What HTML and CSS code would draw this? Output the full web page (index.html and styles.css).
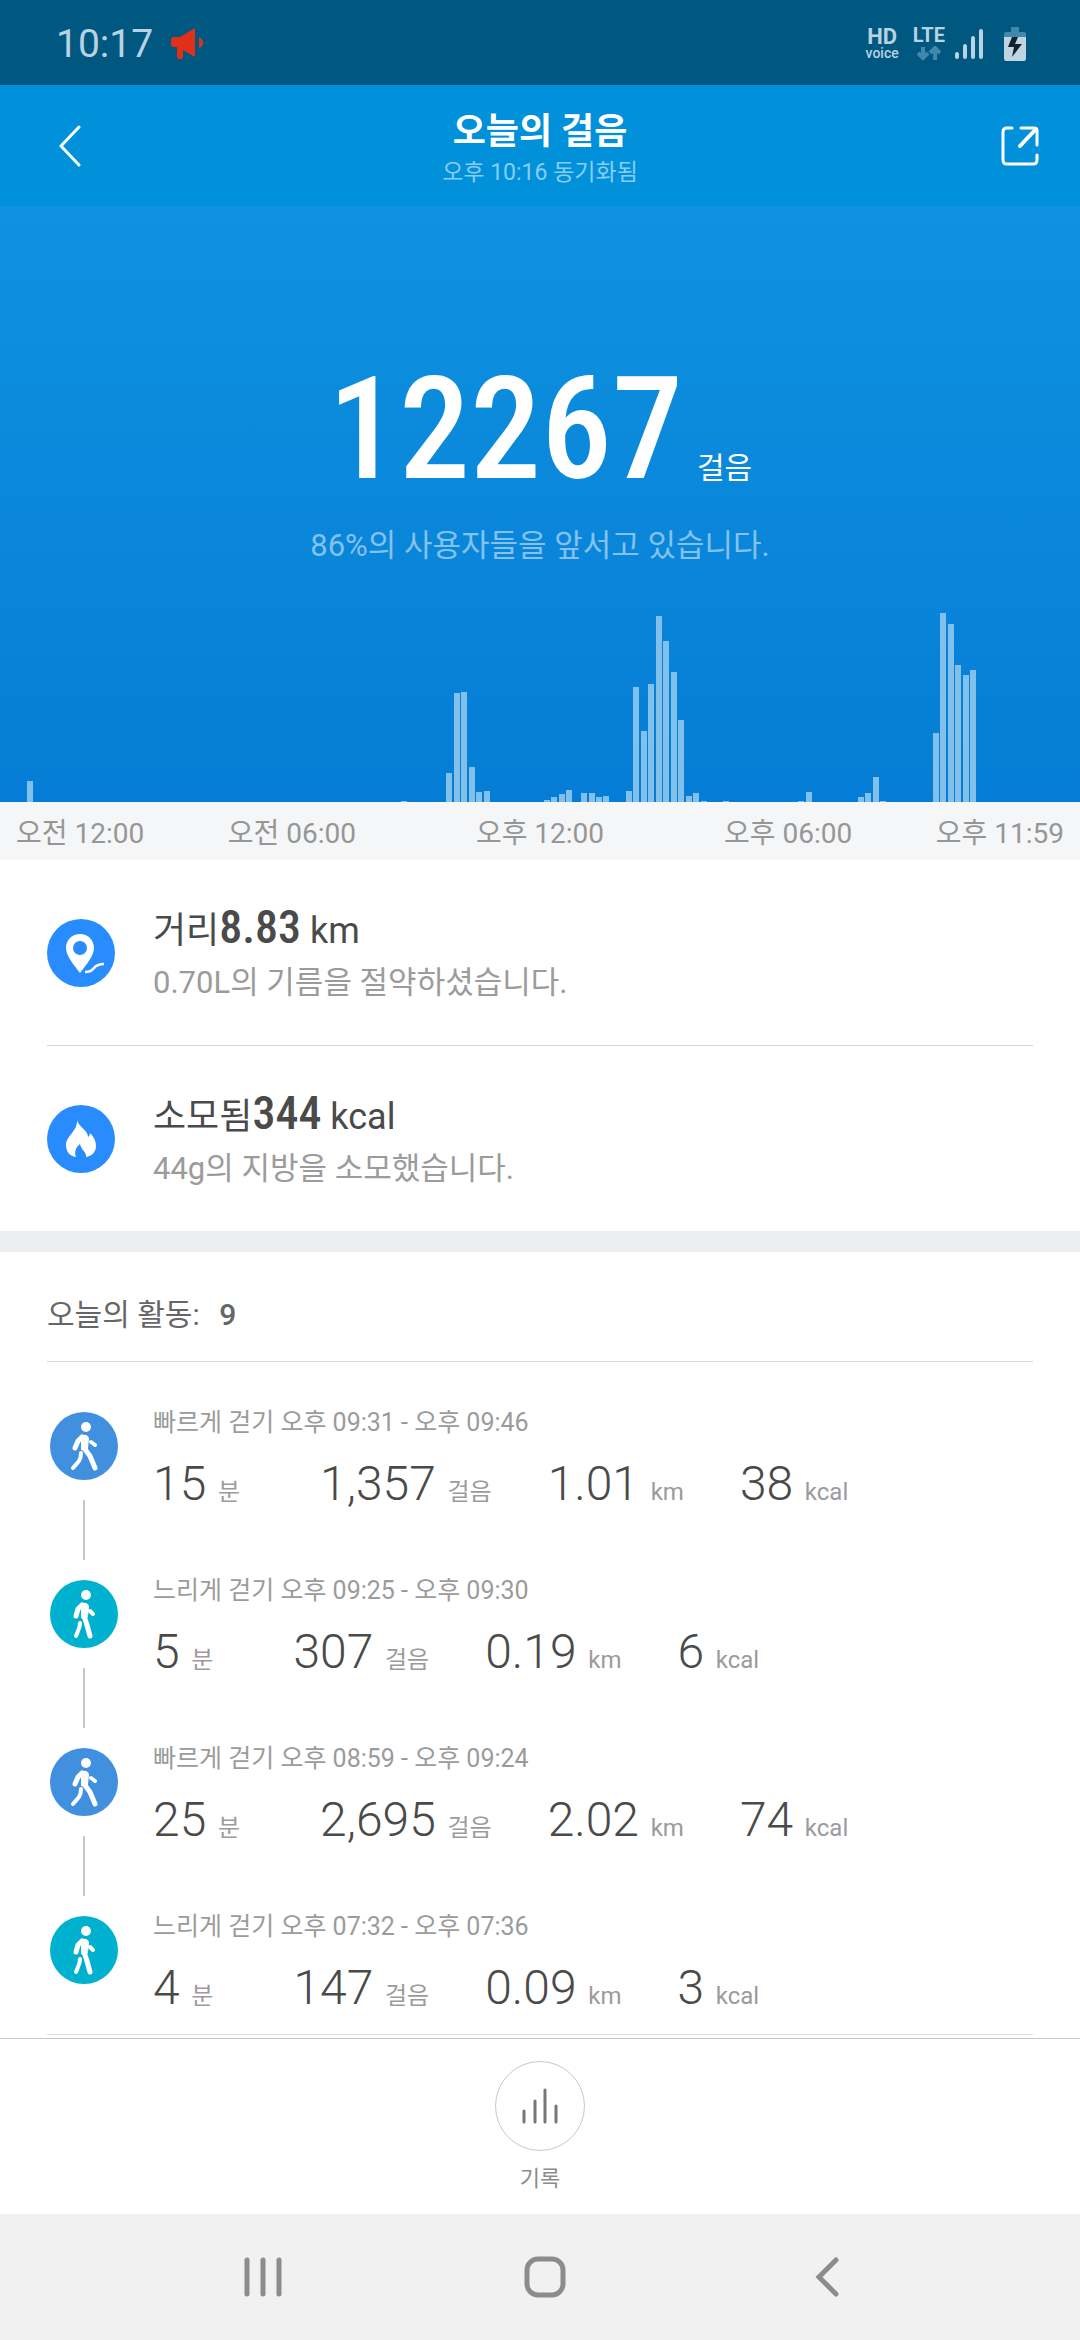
FILE: index.html
```html
<!DOCTYPE html>
<html lang="ko">
  <head>
    <meta charset="UTF-8" />
    <meta name="viewport" content="width=device-width, initial-scale=1.0" />
    <title>오늘의 걸음</title>
    <link rel="stylesheet" href="styles.css">
  </head>
  <body>
    <!-- shared icons -->
    <svg class="sprite" aria-hidden="true">
      <symbol id="walk-fast" viewBox="0 0 68 68">
        <circle cx="36" cy="15" r="5" fill="#fff" />
        <path d="M30 24q3-2 6-1q3 1 3 4l-1 9l-1 3l-6-1l0-10z" fill="#fff" />
        <path d="M32 25l-4 4l-3 7" />
        <path d="M34 36l6 8l5 12" />
        <path d="M31 41q0 5-2 8l-6 7" class="thin" />
        <path d="M41 30l4 3" class="thin" />
      </symbol>
      <symbol id="walk-slow" viewBox="0 0 68 68">
        <circle cx="36" cy="15" r="5" fill="#fff" />
        <path d="M30 24q3-2 6-1q3 1 3 4l-1 9l-1 3l-6-1l0-10z" fill="#fff" />
        <path d="M32 25l-4 4l-2 7" />
        <path d="M34 36l3 9l3 11" />
        <path d="M30 43q0 4-2 8l-2 5" class="thin" />
        <path d="M40 31l3 3" class="thin" />
      </symbol>
    </svg>

    <div class="status-bar">
      <span class="clock">10:17</span>
      <svg class="horn" width="32" height="32" viewBox="0 0 32 32" fill="#e0301a">
        <path d="M2 9h7L24 0v29L12 22v7q0 2-2 2H8q-2 0-2-2V19H2q-2 0-2-2v-6q0-2 2-2z" />
        <path d="M28 9q4 2 4 6t-4 5z" />
      </svg>
      <div class="status-icons">
        <div class="hd">
          <span class="hd-top">HD</span>
          <span class="hd-sub">voice</span>
        </div>
        <div class="lte">
          <span class="lte-text">LTE</span>
          <svg width="24" height="15" viewBox="0 0 24 15" fill="none" stroke="#4089ac" stroke-width="4">
            <path d="M6 1v10M1 7l5 5l5-5M18 14V3M13 7l5-5l5 5" />
          </svg>
        </div>
        <svg class="signal" width="28" height="32" viewBox="0 0 28 32" stroke="#b7d3e1" stroke-width="4" stroke-linecap="round">
          <path d="M2 26v3M10 18v11M18 10v19M26 3v26" />
        </svg>
        <svg class="battery" width="22" height="34" viewBox="0 0 22 34">
          <path d="M7 0h8v5h5q2 0 2 2v4H0V7q0-2 2-2h5z" fill="#4089ac" />
          <path d="M0 10h22v21q0 3-2 3H2q-2 0-2-3z" fill="#bfd5e1" />
          <path d="M8 10h6l-3 7h7L8 30l2-10H4z" fill="#12232d" />
        </svg>
      </div>
    </div>

    <header class="header">
      <button class="icon-btn" aria-label="뒤로">
        <svg width="22" height="42" viewBox="0 0 22 42" fill="none" stroke="#fff" stroke-width="3" stroke-linecap="round" stroke-linejoin="round">
          <path d="M20 2L2 21l18 19" />
        </svg>
      </button>
      <div class="header-text">
        <h1>오늘의 걸음</h1>
        <p>오후 10:16 동기화됨</p>
      </div>
      <button class="icon-btn" aria-label="공유">
        <svg width="38" height="40" viewBox="0 0 38 40" fill="none" stroke="#fff" stroke-width="3" stroke-linecap="round" stroke-linejoin="round">
          <path d="M11 2H6Q2 2 2 6v28q0 4 4 4h26q4 0 4-4v-5M20 2h13q3 0 3 3v14" />
          <path d="M35 3L19 20" stroke-width="4" />
        </svg>
      </button>
    </header>

    <section class="hero">
      <div class="steps">
        <span class="steps-number">12267</span>
        <span class="steps-unit">걸음</span>
      </div>
      <p class="rank">86%의 사용자들을 앞서고 있습니다.</p>
      <div class="chart" id="chart"></div>
    </section>
    <div class="axis">
      <span>오전 12:00</span>
      <div class="axis-middle">
        <span>오전 06:00</span>
        <span>오후 12:00</span>
        <span>오후 06:00</span>
      </div>
      <span>오후 11:59</span>
    </div>

    <section class="summary">
      <div class="summary-row">
        <svg class="badge" viewBox="0 0 68 68">
          <circle cx="34" cy="34" r="34" fill="#288cff" />
          <path d="M33 15c-8 0-14 6-14 14c0 8 8 17 14 25c6-8 14-17 14-25c0-8-6-14-14-14zm0 7a7 7 0 1 1 0 14a7 7 0 1 1 0-14z" fill="#fff" fill-rule="evenodd" />
          <path d="M38 53q6 0 9-4t10-4" fill="none" stroke="#fff" stroke-width="2.5" />
        </svg>
        <div class="summary-text">
          <p class="summary-title">거리<b>8.83</b> km</p>
          <p class="summary-note">0.70L의 기름을 절약하셨습니다.</p>
        </div>
      </div>
      <div class="summary-row">
        <svg class="badge" viewBox="0 0 68 68">
          <circle cx="34" cy="34" r="34" fill="#288cff" />
          <path d="M30 15c1 6 11 10 11 17c1-1 2-2 2-4c4 4 6 8 6 13c0 6-4 10-10 11c1-5-5-7-6-13c-4 3-6 8-4 13c-7-1-10-6-10-12c0-9 12-14 11-25z" fill="#fff" />
        </svg>
        <div class="summary-text">
          <p class="summary-title">소모됨<b>344</b> kcal</p>
          <p class="summary-note">44g의 지방을 소모했습니다.</p>
        </div>
      </div>
    </section>

    <section class="activities">
      <h2>오늘의 활동: <b>9</b></h2>
      <ul class="activity-list">
        <li class="activity">
          <div class="track"><svg class="walker fast"><use href="#walk-fast" /></svg></div>
          <div class="activity-body">
            <p class="activity-time">빠르게 걷기 오후 09:31 - 오후 09:46</p>
            <div class="stats">
              <span class="stat minutes">15 <small>분</small></span>
              <span class="stat">1,357 <small>걸음</small></span>
              <span class="stat">1.01 <small>km</small></span>
              <span class="stat">38 <small>kcal</small></span>
            </div>
          </div>
        </li>
        <li class="activity">
          <div class="track"><svg class="walker slow"><use href="#walk-slow" /></svg></div>
          <div class="activity-body">
            <p class="activity-time">느리게 걷기 오후 09:25 - 오후 09:30</p>
            <div class="stats">
              <span class="stat minutes">5 <small>분</small></span>
              <span class="stat">307 <small>걸음</small></span>
              <span class="stat">0.19 <small>km</small></span>
              <span class="stat">6 <small>kcal</small></span>
            </div>
          </div>
        </li>
        <li class="activity">
          <div class="track"><svg class="walker fast"><use href="#walk-fast" /></svg></div>
          <div class="activity-body">
            <p class="activity-time">빠르게 걷기 오후 08:59 - 오후 09:24</p>
            <div class="stats">
              <span class="stat minutes">25 <small>분</small></span>
              <span class="stat">2,695 <small>걸음</small></span>
              <span class="stat">2.02 <small>km</small></span>
              <span class="stat">74 <small>kcal</small></span>
            </div>
          </div>
        </li>
        <li class="activity">
          <div class="track"><svg class="walker slow"><use href="#walk-slow" /></svg></div>
          <div class="activity-body">
            <p class="activity-time">느리게 걷기 오후 07:32 - 오후 07:36</p>
            <div class="stats">
              <span class="stat minutes">4 <small>분</small></span>
              <span class="stat">147 <small>걸음</small></span>
              <span class="stat">0.09 <small>km</small></span>
              <span class="stat">3 <small>kcal</small></span>
            </div>
          </div>
        </li>
      </ul>
    </section>

    <footer class="footer">
      <button class="history-btn">
        <span class="history-icon">
          <svg width="36" height="36" viewBox="0 0 36 36" stroke="#777" stroke-width="3" stroke-linecap="round">
            <path d="M2 23v11M13 13v21M23 2v32M34 18v16" />
          </svg>
        </span>
        기록
      </button>
    </footer>

    <nav class="nav-bar">
      <button aria-label="최근 앱">
        <svg width="38" height="42" viewBox="0 0 38 42" stroke="#8c8c8c" stroke-width="5" stroke-linecap="round">
          <path d="M3 4v34M19 4v34M35 4v34" />
        </svg>
      </button>
      <button aria-label="홈">
        <svg width="42" height="42" viewBox="0 0 42 42" fill="none" stroke="#8c8c8c" stroke-width="5">
          <rect x="3" y="3" width="36" height="36" rx="11" />
        </svg>
      </button>
      <button aria-label="이전">
        <svg width="24" height="42" viewBox="0 0 24 42" fill="none" stroke="#8c8c8c" stroke-width="5" stroke-linecap="round">
          <path d="M21 4L4 21l17 17" />
        </svg>
      </button>
    </nav>

    <script>
      // one slot per 10 minutes, slot number -> bar height
      const steps = {
        4: 21, 54: 1,
        60: 29, 61: 109, 62: 110, 63: 35, 64: 10, 65: 11,
        73: 2, 74: 5, 75: 8, 76: 12, 78: 9, 79: 9, 80: 5, 81: 6,
        84: 11, 85: 115, 86: 71, 87: 118, 88: 186, 89: 161, 90: 130, 91: 82,
        92: 6, 93: 9, 94: 1, 97: 1, 107: 1, 108: 10,
        115: 5, 116: 9, 117: 25, 118: 1,
        125: 69, 126: 189, 127: 178, 128: 137, 129: 127, 130: 132
      };
      const chart = document.getElementById("chart");

      for (let i = 1; i < 144; i++) {
        const slot = document.createElement("div");
        slot.classList.add("bar");
        slot.style.height = `${steps[i] || 0}px`;
        chart.appendChild(slot);
      }
    </script>
  </body>
</html>
```
FILE: styles.css
```css
* {
  box-sizing: border-box;
}

body {
  margin: 0;
  min-height: 100vh;
  display: flex;
  flex-direction: column;
  font-family: Roboto, "Noto Sans CJK KR", sans-serif;
  background: #fff;
  color: #4a4a4a;
}

h1,
h2,
p,
ul {
  margin: 0;
  padding: 0;
}

button {
  padding: 0;
  border: none;
  background: none;
  font-family: inherit;
  cursor: pointer;
}

svg {
  display: block;
}

.sprite {
  position: absolute;
  width: 0;
  height: 0;
}

.status-bar {
  display: flex;
  align-items: center;
  height: 85px;
  padding: 2px 54px 0 56px;
  background: #005780;
  color: #b7d3e1;
}

.clock {
  font-size: 39px;
  line-height: 48px;
}

.horn {
  margin-left: 18px;
}

.status-icons {
  display: flex;
  align-items: center;
  margin-left: auto;
}

.hd,
.lte {
  display: flex;
  flex-direction: column;
  align-items: center;
  margin-right: 14px;
}

.hd-top {
  font-size: 22px;
  font-weight: 700;
  line-height: 18px;
}

.hd-sub {
  font-size: 14px;
  font-weight: 500;
  line-height: 14px;
}

.lte {
  gap: 2px;
  margin-right: 10px;
}

.lte-text {
  font-size: 20px;
  font-weight: 700;
  line-height: 18px;
}

.signal {
  margin-right: 21px;
}

.header {
  display: flex;
  align-items: center;
  justify-content: space-between;
  height: 121px;
  padding: 0 41px 0 59px;
  background: #0091da;
  color: #fff;
}

.icon-btn {
  display: flex;
  width: 40px;
}

.icon-btn:last-child {
  justify-content: flex-end;
}

.header-text {
  flex: 1;
  padding: 6px 18px 0 0;
  text-align: center;
}

.header-text h1 {
  font-size: 36px;
  font-weight: 700;
  line-height: 48px;
}

.header-text p {
  font-size: 23px;
  line-height: 34px;
  color: #88cdf2;
}

.hero {
  display: flex;
  flex-direction: column;
  align-items: center;
  min-height: 596px;
  padding-top: 164px;
  background: linear-gradient(#0f92e0, #057dd6);
  color: #fff;
}

.steps {
  display: flex;
  align-items: baseline;
  gap: 14px;
}

.steps-number {
  font-family: "Roboto Condensed", Roboto, sans-serif;
  font-size: 142px;
  font-weight: 500;
  line-height: 120px;
}

.steps-unit {
  font-size: 30px;
  line-height: 40px;
}

.rank {
  margin-top: 34px;
  font-size: 31px;
  line-height: 44px;
  color: #84c2ee;
}

.chart {
  display: flex;
  flex: 1;
  align-items: flex-end;
  justify-content: space-around;
  align-self: stretch;
  padding: 0 4px;
}

.bar {
  width: 6px;
  background: #82c0ec;
}

.axis {
  display: flex;
  align-items: center;
  justify-content: space-between;
  height: 58px;
  padding: 0 16px;
  background: #f5f6f8;
  font-size: 28px;
  color: #969696;
}

.axis-middle {
  display: flex;
  gap: 120px;
}

.summary {
  padding: 0 47px;
  border-bottom: 21px solid #edeef0;
}

.summary-row {
  display: flex;
  align-items: center;
  gap: 38px;
  height: 185px;
}

.summary-row + .summary-row {
  height: 186px;
  border-top: 1px solid #d6d6d6;
}

.badge,
.walker {
  width: 68px;
  height: 68px;
}

.summary-text {
  padding-top: 8px;
}

.summary-title {
  font-size: 36px;
  line-height: 52px;
}

.summary-title b {
  font-family: "Roboto Condensed", Roboto, sans-serif;
  font-size: 46px;
  font-weight: 500;
  line-height: 1;
}

.summary-note {
  font-size: 31px;
  line-height: 52px;
  color: #9b9b9b;
}

.activities {
  padding: 0 47px;
}

.activities h2 {
  height: 110px;
  padding-top: 40px;
  border-bottom: 1px solid #d6d6d6;
  font-size: 30px;
  font-weight: 400;
  line-height: 46px;
  color: #666;
}

.activities h2 b {
  margin-left: 12px;
  font-weight: 500;
}

.activity-list {
  list-style: none;
  border-bottom: 1px solid #dcdcdc;
}

.activity {
  display: flex;
  gap: 35px;
  height: 168px;
  padding-left: 3px;
}

.track {
  display: flex;
  flex-direction: column;
  align-items: center;
  justify-content: space-between;
}

.track::before,
.track::after {
  content: "";
  width: 2px;
  height: 30px;
  background: #c8c8c8;
}

.activity:first-child .track::before,
.activity:last-child .track::after {
  background: none;
}

.walker {
  border-radius: 50%;
  fill: none;
  stroke: #fff;
  stroke-width: 5;
  stroke-linecap: round;
  stroke-linejoin: round;
}

symbol [fill="#fff"] {
  stroke: none;
}

.thin {
  stroke-width: 4;
}

.fast {
  background: #4190e0;
}

.slow {
  background: #00b0cf;
}

.activity-body {
  padding-top: 42px;
}

.activity-time {
  font-size: 25px;
  line-height: 38px;
  color: #9b9b9b;
}

.stats {
  display: flex;
  gap: 56px;
  margin-top: 12px;
}

.stat {
  font-size: 48px;
  font-weight: 350;
  line-height: 60px;
  white-space: nowrap;
}

.stat small {
  font-size: 24px;
  font-weight: 400;
  color: #9b9b9b;
}

.minutes {
  margin-right: 24px;
}

.footer {
  display: flex;
  justify-content: center;
  margin-top: 3px;
  height: 176px;
  padding-top: 22px;
  border-top: 1px solid #c8c8c8;
}

.history-btn {
  display: flex;
  flex-direction: column;
  align-items: center;
  gap: 11px;
  font-size: 22px;
  line-height: 34px;
  color: #8c8c8c;
}

.history-icon {
  display: flex;
  align-items: center;
  justify-content: center;
  width: 90px;
  height: 90px;
  border: 1px solid #c8c8c8;
  border-radius: 50%;
}

.nav-bar {
  display: flex;
  flex: 1;
  min-height: 126px;
  padding: 0 112px 0 122px;
  background: #f1f1f1;
}

.nav-bar button {
  display: flex;
  flex: 1;
  align-items: center;
  justify-content: center;
}
```
